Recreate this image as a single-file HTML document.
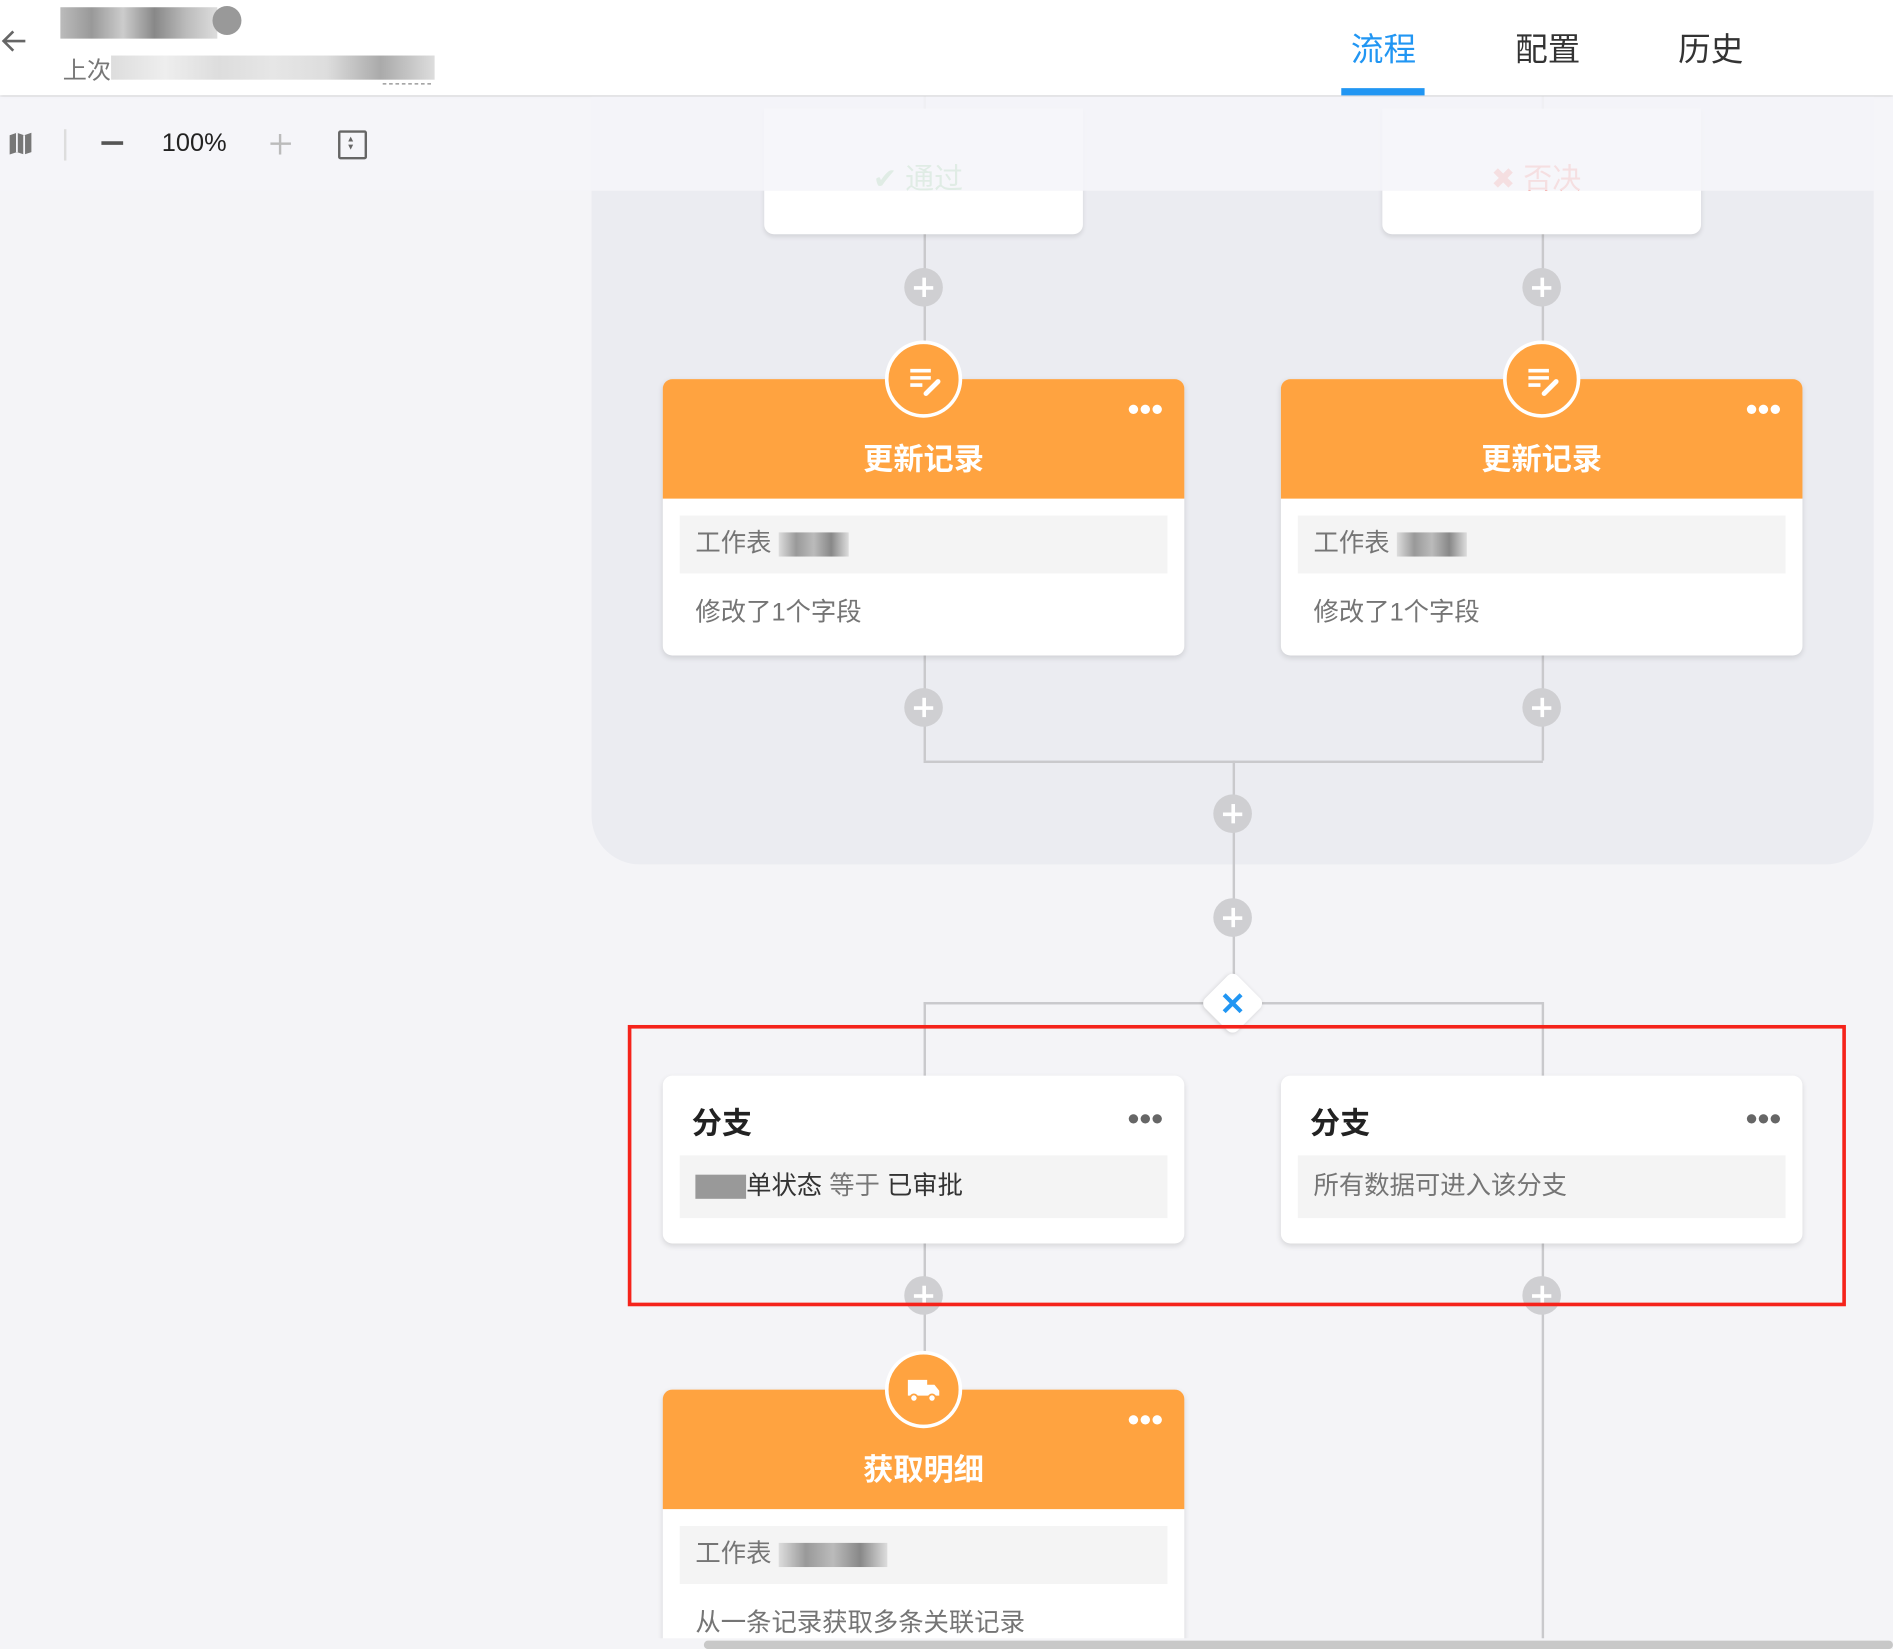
<!DOCTYPE html><html><head><meta charset="utf-8"><style>
html,body{margin:0;padding:0;width:1893px;height:1649px;overflow:hidden;background:#f4f4f7;font-family:"Liberation Sans","Noto Sans CJK SC",sans-serif}
#w{position:absolute;left:0;top:0;width:1568px;height:1366px;transform:scale(1.20727);transform-origin:0 0;background:#f4f4f7;overflow:hidden}
.a{position:absolute}
.vl{position:absolute;width:1.5px;background:#c9c9cc}
.hl{position:absolute;height:1.5px;background:#c9c9cc}
.plus{position:absolute;width:32px;height:32px;border-radius:50%;background:#cfcfd2;margin:-16px 0 0 -16px}
.plus:before,.plus:after{content:"";position:absolute;background:#fff;left:8px;top:14.5px;width:16px;height:3px}
.plus:after{left:14.5px;top:8px;width:3px;height:16px}
.card{position:absolute;width:432px;background:#fff;border-radius:8px;box-shadow:0 2px 5px rgba(0,0,0,.12)}
.oh{height:99px;background:#ffa340;border-radius:8px 8px 0 0;color:#fff;font-weight:bold;font-size:25px;text-align:center;line-height:134px;position:relative}
.dots{position:absolute;right:18px;top:19px;font-size:18px;line-height:10px;letter-spacing:-1px;font-weight:normal}
.ic{position:absolute;left:50%;top:-32px;margin-left:-32px;width:58px;height:58px;border:3px solid #fff;border-radius:50%;background:#ffa340}
.ic svg{display:block}
.gb{margin:14px 14px 0;height:48px;background:#f4f4f4;color:#757575;font-size:21px;line-height:48px;padding-left:13px;position:relative}
.t2{color:#757575;font-size:21px;padding:16px 0 0 27px;height:50px}
.blur{display:inline-block;vertical-align:middle;height:20px;background:linear-gradient(90deg,#ddd,#999,#bbb,#888,#ddd)}
</style></head><body><div id="w">
<div class="a" style="left:0;top:0;width:1568px;height:79px;background:#fff;box-shadow:0 1px 3px rgba(0,0,0,.2)"></div>
<svg class="a" style="left:0;top:22px" width="24" height="24" viewBox="0 0 24 24"><path d="M21 12H3M11 4l-8 8 8 8" stroke="#666" stroke-width="2.2" fill="none"/></svg>
<div class="a" style="left:50px;top:6px;width:130px;height:26px;background:linear-gradient(90deg,#bbb,#999,#ccc,#888,#bbb,#ddd)"></div>
<div class="a" style="left:176px;top:5px;width:24px;height:24px;border-radius:50%;background:#999"></div>
<div class="a" style="left:52px;top:42px;color:#777;font-size:20px">上次</div>
<div class="a" style="left:92px;top:46px;width:268px;height:20px;background:linear-gradient(90deg,#ddd,#eee,#ddd,#e6e6e6,#ddd,#aaa,#ddd)"></div>
<div class="a" style="left:317px;top:69px;width:40px;border-top:1.5px dashed #888"></div>
<div class="a" style="left:1119px;top:19px;font-size:27px;color:#2196f3">流程</div>
<div class="a" style="left:1111px;top:73px;width:69px;height:6px;background:#2196f3"></div>
<div class="a" style="left:1255px;top:19px;font-size:27px;color:#333">配置</div>
<div class="a" style="left:1390px;top:19px;font-size:27px;color:#333">历史</div>

<div class="a" style="left:490px;top:80px;width:1062px;height:636px;background:#ebecf1;border-radius:0 0 40px 40px"></div>
<div class="vl" style="left:765px;top:80px;height:550px"></div>
<div class="vl" style="left:1277px;top:80px;height:550px"></div>
<div class="hl" style="left:765px;top:630px;width:513px"></div>
<div class="vl" style="left:1021px;top:630px;height:201px"></div>
<div class="a" style="left:633px;top:90px;width:264px;height:104px;background:#fff;border-radius:0 0 8px 8px;box-shadow:0 2px 4px rgba(0,0,0,.1)"><div style="position:absolute;left:90px;top:38px;color:#4caf50;font-size:24px">✔ 通过</div></div>
<div class="a" style="left:1145px;top:90px;width:264px;height:104px;background:#fff;border-radius:0 0 8px 8px;box-shadow:0 2px 4px rgba(0,0,0,.1)"><div style="position:absolute;left:90px;top:38px;color:#f44336;font-size:24px">✖ 否决</div></div>
<div class="a" style="left:0;top:80px;width:1568px;height:78px;background:rgba(245,245,249,.88)"></div>
<svg class="a" style="left:7px;top:109px" width="20" height="20" viewBox="0 0 20 20"><path d="M1 3l6-2 6 2 6-2v16l-6 2-6-2-6 2z" fill="#777"/><path d="M7 1v16M13 3v16" stroke="#f5f5f9" stroke-width="1.5"/></svg>
<div class="a" style="left:53px;top:107px;width:2px;height:26px;background:#ddd"></div>
<div class="a" style="left:84px;top:117px;width:18px;height:3px;background:#555"></div>
<div class="a" style="left:134px;top:107px;font-size:21px;color:#222">100%</div>
<div class="a" style="left:224px;top:118px;width:17px;height:2px;background:#bbb"></div>
<div class="a" style="left:231px;top:111px;width:2px;height:17px;background:#bbb"></div>
<div class="a" style="left:280px;top:108px;width:20px;height:20px;border:2px solid #666;border-radius:2px"></div>
<div class="a" style="left:287px;top:112px;font-size:7px;color:#666;line-height:7px">▲<br>▼</div>

<div class="plus" style="left:765px;top:238px"></div><div class="plus" style="left:1277px;top:238px"></div>
<div class="card" style="left:549px;top:314px;height:229px"><div class="oh"><div class="ic"><svg width="58" height="58" viewBox="0 0 58 58"><path d="M18 22h17M18 28h17M18 34h10" stroke="#fff" stroke-width="3"/><path d="M31 41l10-10" stroke="#fff" stroke-width="4" stroke-linecap="round"/></svg></div><span class="dots">●●●</span>更新记录</div><div class="gb">工作表 <span class="blur" style="width:58px"></span></div><div class="t2">修改了1个字段</div></div>
<div class="card" style="left:1061px;top:314px;height:229px"><div class="oh"><div class="ic"><svg width="58" height="58" viewBox="0 0 58 58"><path d="M18 22h17M18 28h17M18 34h10" stroke="#fff" stroke-width="3"/><path d="M31 41l10-10" stroke="#fff" stroke-width="4" stroke-linecap="round"/></svg></div><span class="dots">●●●</span>更新记录</div><div class="gb">工作表 <span class="blur" style="width:58px"></span></div><div class="t2">修改了1个字段</div></div>
<div class="plus" style="left:765px;top:586px"></div><div class="plus" style="left:1277px;top:586px"></div>
<div class="plus" style="left:1021px;top:674px"></div>
<div class="plus" style="left:1021px;top:760px"></div>
<div class="hl" style="left:765px;top:830px;width:513px"></div>
<div class="vl" style="left:765px;top:830px;height:330px"></div>
<div class="vl" style="left:1277px;top:830px;height:540px"></div>
<div class="a" style="left:1002px;top:812px;width:38px;height:38px;background:#fff;border-radius:6px;transform:rotate(45deg);box-shadow:0 1px 4px rgba(0,0,0,.15)"></div>
<svg class="a" style="left:1012px;top:822px" width="18" height="18" viewBox="0 0 18 18"><path d="M2 2l14 14M16 2L2 16" stroke="#2196f3" stroke-width="3.5"/></svg>
<div class="card" style="left:549px;top:891px;height:139px"><div style="position:relative;height:66px;font-weight:bold;font-size:25px;color:#222;padding:20px 0 0 24px;box-sizing:border-box">分支<span class="dots" style="color:#666;top:30px">●●●</span></div><div class="gb" style="margin-top:0;height:52px;line-height:52px;color:#333"><span class="blur" style="width:42px;background:#999"></span>单状态 <span style="color:#777">等于</span> 已审批</div></div>
<div class="card" style="left:1061px;top:891px;height:139px"><div style="position:relative;height:66px;font-weight:bold;font-size:25px;color:#222;padding:20px 0 0 24px;box-sizing:border-box">分支<span class="dots" style="color:#666;top:30px">●●●</span></div><div class="gb" style="margin-top:0;height:52px;line-height:52px">所有数据可进入该分支</div></div>
<div class="plus" style="left:765px;top:1073px"></div><div class="plus" style="left:1277px;top:1073px"></div>
<div class="a" style="left:520px;top:849px;width:1003px;height:227px;border:3px solid #f5231b"></div>
<div class="card" style="left:549px;top:1151px;height:260px"><div class="oh"><div class="ic"><svg width="58" height="58" viewBox="0 0 58 58"><path d="M16 21h16v13H16zM32 25h6l4 5v4H32z" fill="#fff"/><circle cx="21" cy="36" r="3" fill="#fff" stroke="#ffa340" stroke-width="1.5"/><circle cx="36" cy="36" r="3" fill="#fff" stroke="#ffa340" stroke-width="1.5"/></svg></div><span class="dots">●●●</span>获取明细</div><div class="gb">工作表 <span class="blur" style="width:90px"></span></div><div class="t2">从一条记录获取多条关联记录</div></div>
<div class="a" style="left:0;top:1357px;width:1568px;height:9px;background:#f4f4f7"></div>
<div class="a" style="left:583px;top:1359px;width:985px;height:7px;background:#c8c8c8;border-radius:4px"></div>
</div></body></html>
